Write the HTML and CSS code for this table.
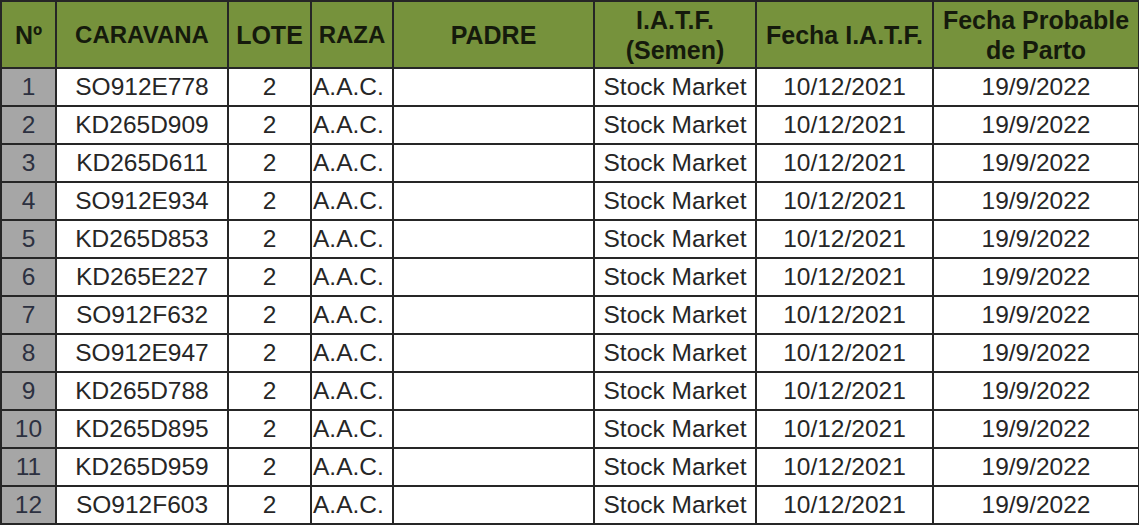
FILE: index.html
```html
<!DOCTYPE html>
<html lang="es">
<head>
<meta charset="utf-8">
<title>Tabla IATF</title>
<link rel="stylesheet" href="styles.css">
</head>
<body>
<table class="sheet">
  <colgroup>
    <col class="c-num">
    <col class="c-car">
    <col class="c-lote">
    <col class="c-raza">
    <col class="c-padre">
    <col class="c-iatf">
    <col class="c-fecha">
    <col class="c-parto">
  </colgroup>
  <thead>
    <tr class="head">
      <th>Nº</th>
      <th class="narrow">CARAVANA</th>
      <th>LOTE</th>
      <th class="narrow">RAZA</th>
      <th>PADRE</th>
      <th>I.A.T.F.<br>(Semen)</th>
      <th>Fecha I.A.T.F.</th>
      <th>Fecha Probable<br>de Parto</th>
    </tr>
  </thead>
  <tbody>
    <tr><td class="num">1</td><td>SO912E778</td><td>2</td><td class="left">A.A.C.</td><td></td><td>Stock Market</td><td>10/12/2021</td><td>19/9/2022</td></tr>
    <tr><td class="num">2</td><td>KD265D909</td><td>2</td><td class="left">A.A.C.</td><td></td><td>Stock Market</td><td>10/12/2021</td><td>19/9/2022</td></tr>
    <tr><td class="num">3</td><td>KD265D611</td><td>2</td><td class="left">A.A.C.</td><td></td><td>Stock Market</td><td>10/12/2021</td><td>19/9/2022</td></tr>
    <tr><td class="num">4</td><td>SO912E934</td><td>2</td><td class="left">A.A.C.</td><td></td><td>Stock Market</td><td>10/12/2021</td><td>19/9/2022</td></tr>
    <tr><td class="num">5</td><td>KD265D853</td><td>2</td><td class="left">A.A.C.</td><td></td><td>Stock Market</td><td>10/12/2021</td><td>19/9/2022</td></tr>
    <tr><td class="num">6</td><td>KD265E227</td><td>2</td><td class="left">A.A.C.</td><td></td><td>Stock Market</td><td>10/12/2021</td><td>19/9/2022</td></tr>
    <tr><td class="num">7</td><td>SO912F632</td><td>2</td><td class="left">A.A.C.</td><td></td><td>Stock Market</td><td>10/12/2021</td><td>19/9/2022</td></tr>
    <tr><td class="num">8</td><td>SO912E947</td><td>2</td><td class="left">A.A.C.</td><td></td><td>Stock Market</td><td>10/12/2021</td><td>19/9/2022</td></tr>
    <tr><td class="num">9</td><td>KD265D788</td><td>2</td><td class="left">A.A.C.</td><td></td><td>Stock Market</td><td>10/12/2021</td><td>19/9/2022</td></tr>
    <tr><td class="num">10</td><td>KD265D895</td><td>2</td><td class="left">A.A.C.</td><td></td><td>Stock Market</td><td>10/12/2021</td><td>19/9/2022</td></tr>
    <tr><td class="num">11</td><td>KD265D959</td><td>2</td><td class="left">A.A.C.</td><td></td><td>Stock Market</td><td>10/12/2021</td><td>19/9/2022</td></tr>
    <tr><td class="num">12</td><td>SO912F603</td><td>2</td><td class="left">A.A.C.</td><td></td><td>Stock Market</td><td>10/12/2021</td><td>19/9/2022</td></tr>
  </tbody>
</table>
</body>
</html>
```

FILE: styles.css
```css
html, body {
  margin: 0;
  padding: 0;
  background: #ffffff;
}

body {
  font-family: "Liberation Sans", Arial, sans-serif;
  color: #222222;
}

.sheet {
  border-collapse: collapse;
  table-layout: fixed;
  width: 1138px;
}

.c-num { width: 55px; }
.c-car { width: 172px; }
.c-lote { width: 83px; }
.c-raza { width: 82px; }
.c-padre { width: 201px; }
.c-iatf { width: 162px; }
.c-fecha { width: 177px; }
.c-parto { width: 206px; }

.sheet th,
.sheet td {
  border: 2px solid #262626;
  padding: 0;
  text-align: center;
  white-space: nowrap;
  overflow: hidden;
}

.head th {
  height: 65px;
  background: #76923c;
  color: #151a0c;
  font-weight: bold;
  font-size: 25px;
  line-height: 30px;
}

.head th.narrow {
  font-size: 24px;
}

.sheet td {
  height: 36px;
  font-size: 24.5px;
  line-height: 36px;
  color: #262626;
}

.sheet td.num {
  background: #a6a6a6;
  color: #2c3040;
}

.sheet td.left {
  text-align: left;
  padding-left: 1px;
}
```
